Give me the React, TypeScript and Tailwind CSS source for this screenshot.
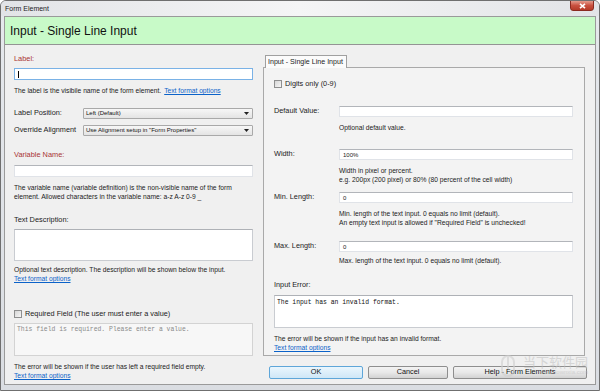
import React from "react"

const RED = "text-[#a83434]"

const Link = () => <div className="text-[#0b62c9] underline leading-[9px] text-[6.7px]">Text format options</div>

const Desc = ({ lines, className = "" }: { lines: string[]; className?: string }) => (
  <div className={`text-[6.7px] leading-[9px] whitespace-nowrap text-[#1b1b1b] ${className}`}>
    {lines.map((l) => (
      <div key={l}>{l}</div>
    ))}
  </div>
)

const Field = ({ value = "", focused = false, className = "" }: { value?: string; focused?: boolean; className?: string }) => (
  <div
    className={`h-[12px] bg-white border flex items-center px-[3px] text-[6px] leading-none text-[#222] ${
      focused ? "border-[#7ab2e6]" : "border-[#e0e3e8] border-t-[#b2b5ba]"
    } ${className}`}
  >
    {focused && <span className="w-px h-[7px] bg-black" />}
    {value}
  </div>
)

const Select = ({ value }: { value: string }) => (
  <div className="flex-1 h-[11px] flex items-center bg-gradient-to-b from-[#f7f7f7] to-[#e4e4e4] border border-[#a9a9a9] rounded-[1px] pl-[2px] pr-[3px] text-[6px] leading-none text-[#111]">
    <span>{value}</span>
    <svg className="ml-auto" width="5" height="3" viewBox="0 0 5 3">
      <path d="M0 0h5L2.5 3z" fill="#222" />
    </svg>
  </div>
)

const Check = ({ label }: { label: string }) => (
  <div className="flex items-center gap-[3px] h-[10px] text-[7.3px] text-[#1b1b1b]">
    <span className="w-[8px] h-[8px] border border-[#8e8f8f] bg-gradient-to-br from-[#d6d6d6] to-[#f6f6f6]" />
    <span>{label}</span>
  </div>
)

const Button = ({ label, primary = false, className = "" }: { label: string; primary?: boolean; className?: string }) => (
  <div
    className={`h-[13px] flex items-center justify-center rounded-[2px] border text-[7.3px] text-[#111] ${
      primary
        ? "border-[#5ea6d9] bg-gradient-to-b from-[#eaf6fd] to-[#cfe7f7]"
        : "border-[#8e8e8e] bg-gradient-to-b from-[#f3f3f3] via-[#e8e8e8] to-[#d2d2d2]"
    } ${className}`}
  >
    {label}
  </div>
)

const Row = ({ label, value, className = "" }: { label: string; value?: string; className?: string }) => (
  <div className={`flex items-center h-[11px] ${className}`}>
    <span className="w-[65px] text-[7.3px] text-[#1b1b1b]">{label}</span>
    <Field value={value} className="flex-1 !h-[11px]" />
  </div>
)

export default function App() {
  return (
    <div className="relative w-[600px] h-[391px] flex flex-col bg-gradient-to-b from-[#e6e9ed] to-[#dadde2] border border-[#6f6f6f] rounded-t-[6px] px-[3px] pb-[5px] font-['Liberation_Sans',Arial,sans-serif] overflow-hidden">
      {/* title bar */}
      <div className="h-[15px] flex items-start justify-between bg-gradient-to-r from-[#e2e4e7] via-[#f5f5f6] to-[#e2e4e7] -mx-[3px] px-[3px]">
        <span className="mt-[3px] ml-[1px] text-[7px] leading-[9px] text-[#1d1d1d]">Form Element</span>
        <div className="w-[24px] h-[11px] -mt-px mr-[2px] rounded-b-[3px] border border-[#8a2a20] bg-gradient-to-b from-[#e49a8c] via-[#c9503f] to-[#b53a27] flex items-center justify-center">
          <svg width="7" height="6" viewBox="0 0 7 6">
            <path d="M1 0.8l5 4.4M6 0.8l-5 4.4" stroke="#fff" strokeWidth="1.6" />
          </svg>
        </div>
      </div>

      {/* content */}
      <div className="flex-1 flex flex-col bg-[#f0f0f0] border border-[#9a9a9a]">
        <div className="h-[28px] bg-[#c8fac8] border-b border-[#949494] flex items-center pl-[5px] text-[12px] text-[#111]">
          Input - Single Line Input
        </div>

        <div className="flex gap-[10px] pl-[9px]">
          {/* left column */}
          <div className="w-[239px] pt-[9px]">
            <div className={`text-[7.4px] leading-[10px] ${RED}`}>Label:</div>
            <Field focused className="mt-[4px]" />
            <div className="mt-[6px] flex gap-[3px] items-baseline">
              <Desc lines={["The label is the visibile name of the form element."]} />
              <Link />
            </div>

            <div className="mt-[12px] flex items-center h-[12px]">
              <span className="w-[69px] text-[7.3px] text-[#1b1b1b]">Label Position:</span>
              <Select value="Left (Default)" />
            </div>
            <div className="mt-[5px] flex items-center h-[12px]">
              <span className="w-[69px] text-[7.3px] text-[#1b1b1b] whitespace-nowrap">Override Alignment</span>
              <Select value={'Use Alignment setup in "Form Properties"'} />
            </div>

            <div className={`mt-[14px] text-[7.4px] leading-[10px] ${RED}`}>Variable Name:</div>
            <Field className="mt-[5px]" />
            <Desc
              className="mt-[6px]"
              lines={[
                "The variable name (variable definition) is the non-visible name of the form",
                "element. Allowed characters in the variable name: a-z A-z 0-9 _",
              ]}
            />

            <div className="mt-[14px] text-[7.4px] leading-[10px] text-[#1b1b1b]">Text Description:</div>
            <div className="mt-[4px] h-[32px] bg-white border border-[#c9ccd1] border-t-[#aeb1b6]" />
            <Desc className="mt-[4px]" lines={["Optional text description. The description will be shown below the input."]} />
            <Link />

            <div className="mt-[26px]">
              <Check label="Required Field (The user must enter a value)" />
            </div>
            <div className="mt-[4px] h-[33px] bg-[#f7f7f7] border border-[#d3d3d3] px-[2px] pt-[2px] font-['Liberation_Mono',monospace] text-[6.4px] leading-[8px] text-[#8a8a8a]">
              This field is required. Please enter a value.
            </div>
            <Desc className="mt-[6px]" lines={["The error will be shown if the user has left a required field empty."]} />
            <Link />
          </div>

          {/* right column */}
          <div className="w-[322px] pt-[10px]">
            <div className="ml-[2px] w-[82px] h-[13px] -mb-px relative bg-[#fbfbfb] border border-b-0 border-[#a0a0a0] flex items-center pl-[2px] text-[7.1px] text-[#1b1b1b]">
              Input - Single Line Input
            </div>
            <div className="h-[289px] border border-[#a9a9a9] bg-[#f3f3f3] pl-[10px] pr-[11px] pt-[11px]">
              <Check label="Digits only (0-9)" />

              <Row label="Default Value:" className="mt-[17px]" />
              <Desc className="mt-[6px] ml-[65px]" lines={["Optional default value."]} />

              <Row label="Width:" value="100%" className="mt-[17px]" />
              <Desc
                className="mt-[6px] ml-[65px]"
                lines={["Width in pixel or percent.", "e.g. 200px (200 pixel) or 80% (80 percent of the cell width)"]}
              />

              <Row label="Min. Length:" value="0" className="mt-[8px]" />
              <Desc
                className="mt-[6px] ml-[65px]"
                lines={[
                  "Min. length of the text input. 0 equals no limit (default).",
                  'An empty text input is allowed if "Required Field" is unchecked!',
                ]}
              />

              <Row label="Max. Length:" value="0" className="mt-[14px]" />
              <Desc className="mt-[4px] ml-[65px]" lines={["Max. length of the text input. 0 equals no limit (default)."]} />

              <div className="mt-[15px] text-[7.3px] leading-[10px] text-[#1b1b1b]">Input Error:</div>
              <div className="mt-[5px] h-[33px] bg-white border border-[#c9ccd1] border-t-[#aeb1b6] px-[2px] pt-[3px] font-['Liberation_Mono',monospace] text-[6.4px] leading-[8px] text-[#111]">
                The input has an invalid format.
              </div>
              <Desc className="mt-[6px]" lines={["The error will be shown if the input has an invalid format."]} />
              <Link />
            </div>

            <div className="mt-[10px] ml-[6px] flex gap-[5px] w-[318px]">
              <Button primary label="OK" className="w-[94px]" />
              <Button label="Cancel" className="w-[80px]" />
              <Button label="Help - Form Elements" className="w-[134px]" />
            </div>
          </div>
        </div>
      </div>

      {/* watermark */}
      <div className="absolute left-[500px] top-[354px] flex items-start gap-[8px] opacity-60 pointer-events-none">
        <div className="w-[14px] h-[22px] rounded-full border-[2px] border-[#cfcfcf] flex justify-center">
          <span className="w-[2px] h-[12px] bg-[#cfcfcf]" />
        </div>
        <div className="flex flex-col items-end">
          <span className="text-[13px] leading-[14px] text-[#c4c4c4] font-['Noto_Sans_CJK_SC',sans-serif]">当下软件园</span>
          <span className="text-[6px] leading-[7px] text-[#c4c4c4]">www.downxia.com</span>
        </div>
      </div>
    </div>
  )
}
